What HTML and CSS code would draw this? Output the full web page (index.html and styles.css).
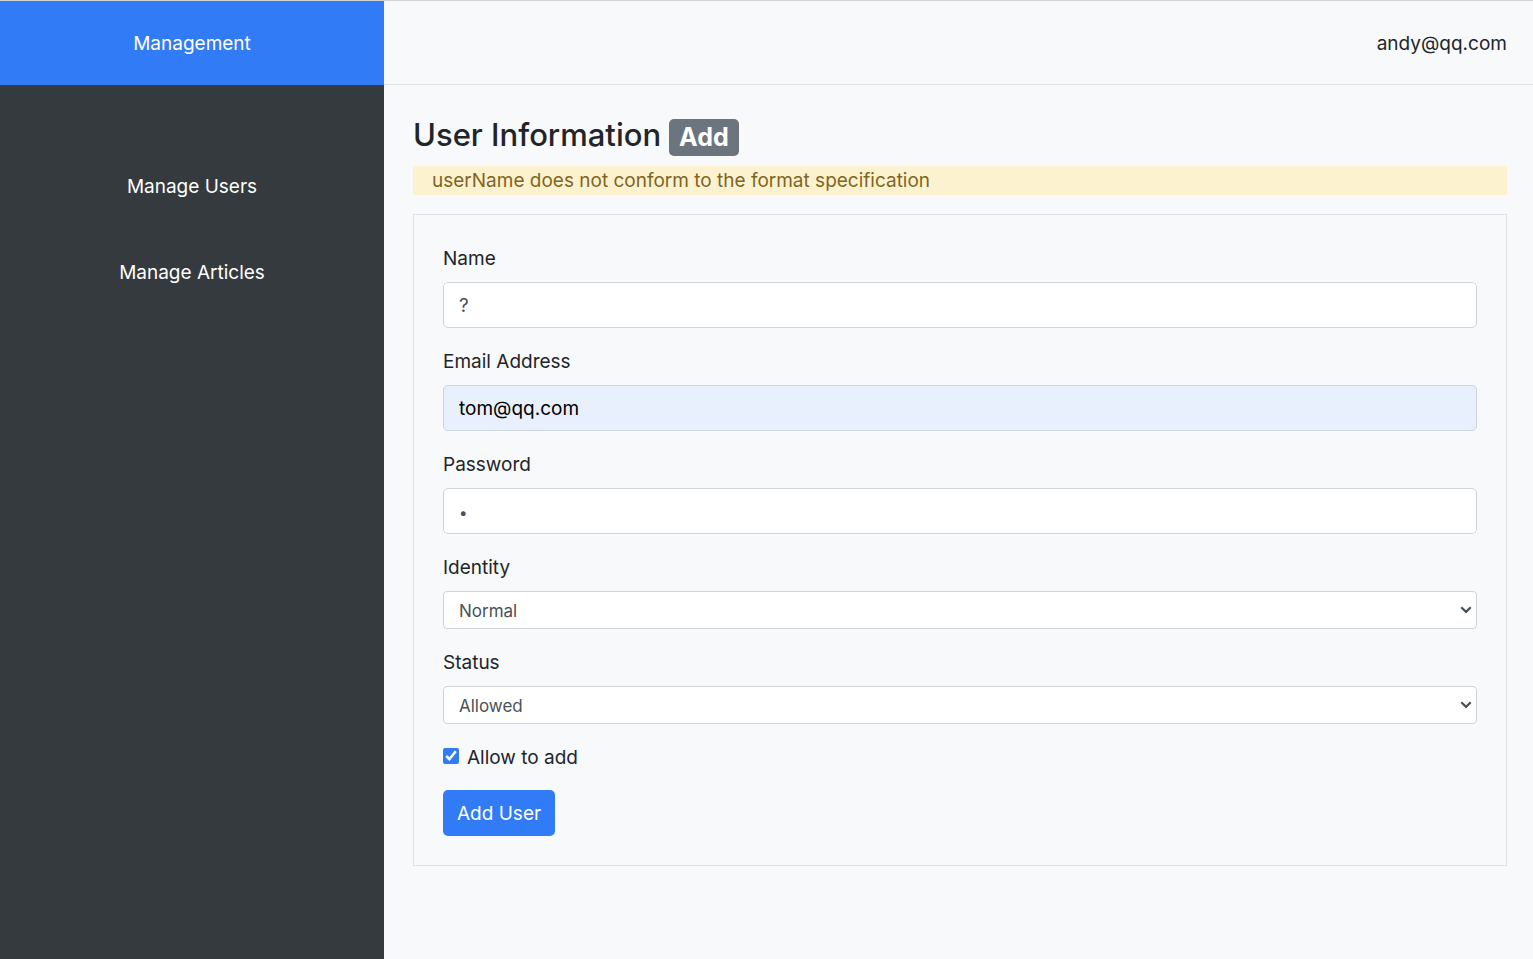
FILE: index.html
```html
<!DOCTYPE html>
<html lang="en">
<head>
<meta charset="utf-8">
<meta name="viewport" content="width=device-width, initial-scale=1">
<title>Management</title>
<link rel="stylesheet" href="styles.css">
</head>
<body>
<div class="layout">
  <aside class="sidebar">
    <a class="brand" href="#">Management</a>
    <nav class="menu">
      <a class="menu-link" href="#">Manage Users</a>
      <a class="menu-link" href="#">Manage Articles</a>
    </nav>
  </aside>
  <div class="main">
    <header class="topbar"><span class="account">andy@qq.com</span></header>
    <main class="content">
      <h2 class="title">User Information <span class="badge">Add</span></h2>
      <div class="alert" role="alert">userName does not conform to the format specification</div>
      <form class="card">
        <div class="field">
          <label for="name">Name</label>
          <input class="control" id="name" type="text" value="?">
        </div>
        <div class="field">
          <label for="email">Email Address</label>
          <input class="control control-filled" id="email" type="email" value="tom@qq.com">
        </div>
        <div class="field">
          <label for="password">Password</label>
          <input class="control control-password" id="password" type="password" value="1">
        </div>
        <div class="field">
          <label for="identity">Identity</label>
          <div class="select-wrap">
            <select class="select" id="identity"><option>Normal</option><option>Admin</option></select>
            <svg class="chevron" viewBox="0 0 12 8" aria-hidden="true"><path d="M1.3 1.3 6 5.9l4.7-4.6"/></svg>
          </div>
        </div>
        <div class="field">
          <label for="status">Status</label>
          <div class="select-wrap">
            <select class="select" id="status"><option>Allowed</option><option>Forbidden</option></select>
            <svg class="chevron" viewBox="0 0 12 8" aria-hidden="true"><path d="M1.3 1.3 6 5.9l4.7-4.6"/></svg>
          </div>
        </div>
        <div class="check">
          <input class="checkbox" id="allow" type="checkbox" checked>
          <label for="allow">Allow to add</label>
        </div>
        <button class="submit" type="button">Add User</button>
      </form>
    </main>
  </div>
</div>
</body>
</html>
```

FILE: styles.css
```css
* { box-sizing: border-box; }
body {
  margin: 0;
  background: #f8f9fb;
  color: #212529;
  font: 19px/30px Inter, "Liberation Sans", sans-serif;
}
.layout {
  display: grid;
  grid-template-columns: 384px 1fr;
  min-height: 100vh;
  border-top: 1px solid #d3d4d6;
}
.sidebar { background: #353a3e; }
.brand {
  display: block;
  padding: 28px 28px 26px;
  background: #327bf7;
  color: #fff;
  text-align: center;
  text-decoration: none;
}
.menu {
  display: flex;
  flex-direction: column;
  gap: 56px;
  padding-top: 87px;
  text-align: center;
}
.menu-link { color: #fff; text-decoration: none; }
.main { min-width: 0; }
.topbar {
  padding: 28px 26px 25px;
  border-bottom: 1px solid #dee2e6;
  text-align: right;
}
.content { padding: 29px 26px 29px 29px; }
.title {
  display: flex;
  align-items: center;
  gap: 8px;
  margin: 0 0 10px;
  font-size: 31px;
  font-weight: 500;
  line-height: 42px;
}
.badge {
  margin-top: 4px;
  padding: 6px 10px;
  border-radius: 5px;
  background: #6c757d;
  color: #fff;
  font-size: 25px;
  font-weight: 700;
  line-height: 25px;
}
.alert {
  margin-bottom: 19px;
  padding: 0 19px;
  background: #fdf2d0;
  color: #7f651e;
  line-height: 29px;
}
.card {
  padding: 29px;
  border: 1px solid #dee2e6;
}
.field {
  display: flex;
  flex-direction: column;
  gap: 8px;
  margin-bottom: 19px;
}
.control, .select {
  width: 100%;
  border: 1px solid #ced4da;
  border-radius: 5px;
  background: #fff;
  color: #495057;
  font-family: inherit;
}
.control {
  height: 46px;
  padding: 0 15px;
  font-size: 19px;
}
.control-filled { background: #e8effd; color: #000; }
.control-password { padding-top: 2px; font-size: 15px; }
.select-wrap { position: relative; display: flex; }
.select {
  height: 38px;
  padding: 2px 30px 0 15px;
  border-radius: 4px;
  font-size: 17px;
  appearance: none;
}
.chevron {
  position: absolute;
  top: 15px;
  right: 5px;
  width: 12px;
  height: 8px;
  fill: none;
  stroke: #495057;
  stroke-width: 2.2;
  pointer-events: none;
}
.check {
  display: flex;
  align-items: flex-start;
  gap: 8px;
  margin-bottom: 17px;
}
.checkbox {
  width: 16px;
  height: 16px;
  margin: 5px 0 0;
  accent-color: #327bf7;
}
.submit {
  display: block;
  height: 46px;
  padding: 2px 14px 0;
  border: 0;
  border-radius: 5px;
  background: #327bf7;
  color: #fff;
  font: inherit;
}
```
